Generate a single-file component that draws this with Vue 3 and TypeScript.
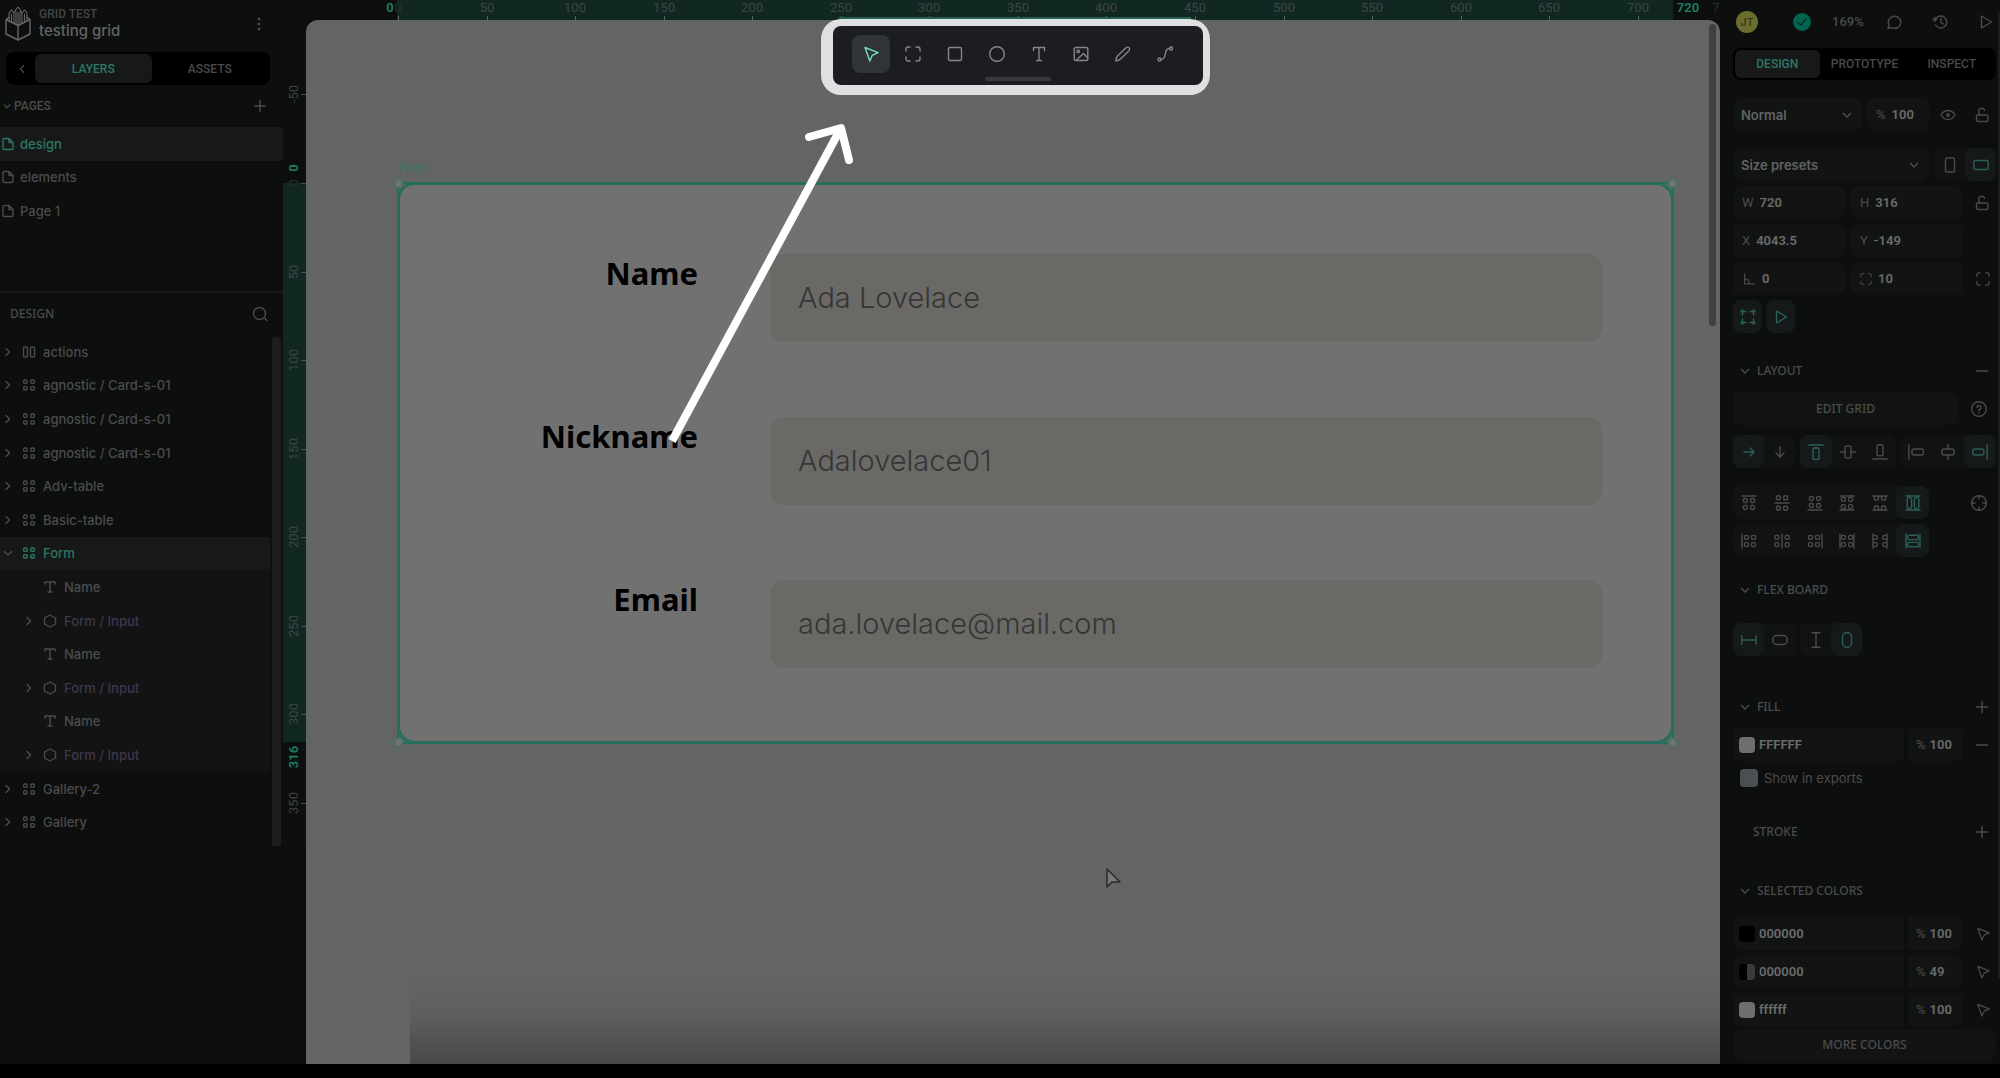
<script setup lang="ts">
import { h, ref, type FunctionalComponent } from 'vue'

const dot = (x: number, y: number) => `<rect x="${x - 2}" y="${y - 2}" width="4" height="4" rx="1.4"/>`
const dots = (...ys: number[]) => ys.map((y) => dot(4.4, y) + dot(11.6, y)).join('')
const line = (y: number) => `<path d="M1 ${y}h14"/>`
const turned = (body: string) => `<g transform="matrix(0 1 1 0 0 0)">${body}</g>`

const justify = [
  line(1) + dots(5.5, 12.5),
  dots(2.8, 13.2) + line(8),
  dots(3.5, 10.5) + line(15),
  line(1) + dots(4.4, 11.6) + line(15),
  '<path d="M1 1h14M1 15h14M2.4 1v3a1 1 0 0 0 1 1h2a1 1 0 0 0 1-1V1M9.6 1v3a1 1 0 0 0 1 1h2a1 1 0 0 0 1-1V1M2.4 15v-3a1 1 0 0 1 1-1h2a1 1 0 0 1 1 1v3M9.6 15v-3a1 1 0 0 1 1-1h2a1 1 0 0 1 1 1v3"/>',
  line(1) + line(15) + '<rect x="2.2" y="2.6" width="4.4" height="10.8" rx="1.6"/><rect x="9.4" y="2.6" width="4.4" height="10.8" rx="1.6"/>',
]

const glyphs: Record<string, string> = {
  logo: '<g stroke-width="1.4"><path d="M1 12.500 13 18.500l12-6V27L13 33 1 27zM13 18.500V33M1 12.500l3-2M25 12.500l-3-2"/><path d="M4 13.500V6l2.500-3L9 6v10M9 6l2-3.500L13 0l2 2.500L17 6v10M17 6l2.500-3L22 6v7.500M11 5v12M13 5v13M15 5v12M6.500 7v8M19.500 7v8" stroke-width="1.100"/></g>',
  more: '<g fill="currentColor" stroke="none"><circle cx="8" cy="3" r="1.300"/><circle cx="8" cy="8" r="1.300"/><circle cx="8" cy="13" r="1.300"/></g>',
  left: '<path d="m10 4-4 4 4 4"/>',
  right: '<path d="m6 4.500 3.500 3.500L6 11.500"/>',
  down: '<path d="m4.500 6.500 3.500 3.500 3.500-3.500"/>',
  plus: '<path d="M8 2.500v11M2.500 8h11"/>',
  minus: '<path d="M2.500 8h11"/>',
  page: '<path d="M9 2.500H4.500a1.500 1.500 0 0 0-1.500 1.500v8a1.500 1.500 0 0 0 1.500 1.500h7a1.500 1.500 0 0 0 1.500-1.500V6.500zM9 2.500v4h4"/>',
  search: '<circle cx="7.500" cy="7.500" r="6"/><path d="m12 12 3 2.500"/>',
  flex: '<rect x="2.500" y="3" width="4" height="10" rx="1"/><rect x="9.500" y="3" width="4" height="10" rx="1"/>',
  grid: '<rect x="2.700" y="3" width="3.400" height="3.400" rx=".8"/><rect x="9.900" y="3" width="3.400" height="3.400" rx=".8"/><rect x="2.700" y="9.600" width="3.400" height="3.400" rx=".8"/><rect x="9.900" y="9.600" width="3.400" height="3.400" rx=".8"/>',
  text: '<path d="M3 5V3h10v2M8 3v10M6 13h4"/>',
  component: '<path d="m8 2 5.500 3v6L8 14l-5.500-3V5z"/>',
  pointer: '<path d="m2 1.500 13 5.200-5.700 2.600L6.800 15z"/>',
  board: '<path d="M1 5V3a2 2 0 0 1 2-2h2M11 1h2a2 2 0 0 1 2 2v2M15 11v2a2 2 0 0 1-2 2h-2M5 15H3a2 2 0 0 1-2-2v-2"/>',
  rect: '<rect x="1.500" y="1.500" width="13" height="13" rx="1.500"/>',
  circle: '<circle cx="8" cy="8" r="7.300"/>',
  type: '<path d="M2.500 4.500v-3h11v3M8 1.500v13M5.500 14.500h5"/>',
  image: '<rect x="1.200" y="1.500" width="13.600" height="13" rx="1.500"/><circle cx="5.200" cy="5.500" r="1.200"/><path d="m3 14.500 7.500-7 4.300 4.500"/>',
  pencil: '<path d="M1 15c0-3 .5-4 1.500-5L11 1.800a2 2 0 0 1 3 0 2 2 0 0 1 0 2.900L5.500 13c-1 1-2 1.500-4.500 2z"/>',
  path: '<circle cx="2.500" cy="13.500" r="1.500"/><circle cx="14" cy="2.500" r="1.500"/><path d="M4 13.500c7 0 1.500-11 8.500-11"/>',
  comment: '<path d="M2 14.500 3 11a6.300 6 0 1 1 2.500 2.500z"/>',
  history: '<path d="M3.300 5.500A6 6 0 1 1 3.500 11M9 4.500V8.500l2.500 1.500M.8 5.500h4M2.800 3.500v4"/>',
  play: '<path d="M3.500 2v12l10-6z"/>',
  eye: '<path d="M1 8c3.500-6 10.500-6 14 0-3.500 6-10.500 6-14 0z"/><circle cx="8" cy="8" r="1.300"/>',
  lock: '<rect x="2.500" y="8" width="11.500" height="6.500" rx="1.500"/><path d="M5 8V4.500a2.700 2.700 0 0 1 5.500-1"/>',
  portrait: '<rect x="3.500" y="1" width="9" height="14" rx="1.500"/>',
  landscape: '<rect x=".8" y="3.500" width="14.400" height="9" rx="1.500"/>',
  angle: '<path d="M3 2.500v11h11M3 8c3.500 0 5.500 2 5.500 5.500"/>',
  clip: '<path d="M2.500.5v5.500M.5 2.500H6M13.500.5v5.500M15.500 2.500H10M2.500 15.500V10M.5 13.500H6M13.500 15.500V10M15.500 13.500H10"/>',
  help: '<circle cx="8" cy="8" r="7.300"/><path d="M6 6.500a2 2 0 1 1 2.800 1.800c-.5.3-.8.600-.8 1.200M8 11.300v.6"/>',
  target: '<circle cx="8" cy="8" r="7.300"/><path d="M8 1v3M8 12v3M1 8h3M12 8h3"/>',
  arrowRight: '<path d="M3 8h10M9 4l4 4-4 4"/>',
  arrowDown: '<path d="M8 3v10M4 9l4 4 4-4"/>',
  alignTop: '<path d="M.8 1h14.400"/><rect x="5" y="4" width="6" height="11.500" rx="1.500"/>',
  alignMiddle: '<rect x="5" y="2" width="6" height="12" rx="1.500"/><path d="M.5 8H5M11 8h4.500"/>',
  alignBottom: '<path d="M.8 15h14.400"/><rect x="5" y=".8" width="6" height="11" rx="1.500"/>',
  alignLeft: '<path d="M.8 1v14"/><rect x="4" y="5" width="11.500" height="6" rx="2"/>',
  alignCenter: '<rect x="2" y="5" width="12" height="6" rx="2"/><path d="M8 .5V5M8 11v4.500"/>',
  alignRight: '<path d="M15.200 1v14"/><rect x=".8" y="5" width="11" height="6" rx="2"/>',
  fixWidth: '<path d="M.8 4v8M15.200 4v8M1 8h14"/>',
  hugWidth: '<rect x=".8" y="3.500" width="14.400" height="9" rx="4"/>',
  fixHeight: '<path d="M4 .8h8M4 15.200h8M8 1v14"/>',
  hugHeight: '<rect x="3.500" y=".8" width="9" height="14.400" rx="4"/>',
  check: '<path d="m3 8.500 3.500 3 6.500-7"/>',
}
justify.forEach((body, i) => {
  glyphs[`justify${i}`] = body
  glyphs[`stack${i}`] = turned(body)
})

const Icon: FunctionalComponent<{ name: string; size?: number }> = (p) =>
  h('svg', {
    width: p.size ?? 16,
    height: p.name === 'logo' ? 34 : (p.size ?? 16),
    viewBox: p.name === 'logo' ? '0 0 26 34' : '0 0 16 16',
    fill: 'none',
    stroke: 'currentColor',
    'stroke-width': 1.4,
    'stroke-linejoin': 'round',
    'stroke-linecap': 'round',
    'aria-hidden': 'true',
    innerHTML: glyphs[p.name],
  })
Icon.props = ['name', 'size']

const pages = ['design', 'elements', 'Page 1']

interface Layer { name: string; icon: string; kind?: 'active' | 'child' | 'component' }
const card: Layer = { name: 'agnostic / Card-s-01', icon: 'grid' }
const pair: Layer[] = [
  { name: 'Name', icon: 'text', kind: 'child' },
  { name: 'Form / Input', icon: 'component', kind: 'component' },
]
const layers: Layer[] = [
  { name: 'actions', icon: 'flex' },
  card, card, card,
  { name: 'Adv-table', icon: 'grid' },
  { name: 'Basic-table', icon: 'grid' },
  { name: 'Form', icon: 'grid', kind: 'active' },
  ...pair, ...pair, ...pair,
  { name: 'Gallery-2', icon: 'grid' },
  { name: 'Gallery', icon: 'grid' },
]

const zoom = 1.771
const marks = (from: number, to: number) =>
  Array.from({ length: (to - from) / 50 + 1 }, (_, i) => from + i * 50)
const along = (value: number, origin: number) => `${Math.round(origin + value * zoom)}px`
const across = marks(0, 700)
const downwards = marks(-50, 350)

const tools = ['pointer', 'board', 'rect', 'circle', 'type', 'image', 'pencil', 'path']
const fields = [
  { id: 'name', label: 'Name', value: 'Ada Lovelace' },
  { id: 'nickname', label: 'Nickname', value: 'Adalovelace01' },
  { id: 'email', label: 'Email', value: 'ada.lovelace@mail.com' },
]
const measures = [
  [{ sign: 'W', value: '720', name: 'Width' }, { sign: 'H', value: '316', name: 'Height' }],
  [{ sign: 'X', value: '4043.5', name: 'X' }, { sign: 'Y', value: '-149', name: 'Y' }],
]
const colors = [
  { hex: '000000', alpha: '100', tone: 'black' },
  { hex: '000000', alpha: '49', tone: 'half-tone' },
  { hex: 'ffffff', alpha: '100', tone: 'white' },
]
const alignGroups = [
  { names: ['arrowRight', 'arrowDown'], on: 0, cls: 'two' },
  { names: ['alignTop', 'alignMiddle', 'alignBottom'], on: 0, cls: 'three' },
  { names: ['alignLeft', 'alignCenter', 'alignRight'], on: 2, cls: 'three' },
]
const sizeGroups = [
  { names: ['fixWidth', 'hugWidth'], on: 0 },
  { names: ['fixHeight', 'hugHeight'], on: 1 },
]
const exported = ref(false)
</script>

<template>
  <div class="app">
    <div class="workspace">
      <aside class="left">
        <header class="file">
          <Icon name="logo" :size="26" />
          <div class="titles">
            <span class="project">GRID TEST</span>
            <span class="title">testing grid</span>
          </div>
          <button class="bare" aria-label="File menu"><Icon name="more" /></button>
        </header>
        <nav class="tabs left-tabs">
          <button class="back" aria-label="Collapse"><Icon name="left" :size="14" /></button>
          <button class="tab on">LAYERS</button>
          <button class="tab">ASSETS</button>
        </nav>
        <div class="pages-head">
          <Icon name="down" :size="14" />
          <span>PAGES</span>
          <button class="bare" aria-label="Add page"><Icon name="plus" /></button>
        </div>
        <ul class="pages">
          <li v-for="(p, i) in pages" :key="p">
            <button :class="{ on: i === 0 }"><Icon name="page" />{{ p }}</button>
          </li>
        </ul>
        <div class="layers-head">
          <span>DESIGN</span>
          <button class="bare" aria-label="Search layers"><Icon name="search" /></button>
        </div>
        <div class="layers-wrap">
          <ul class="layers">
            <li v-for="(l, i) in layers" :key="i">
              <button :class="l.kind">
                <Icon v-if="l.kind !== 'child'" class="fold" :name="l.kind === 'active' ? 'down' : 'right'" />
                <span v-else class="fold"></span>
                <Icon :name="l.icon" />
                <span class="name">{{ l.name }}</span>
              </button>
            </li>
          </ul>
          <div class="layers-bar"></div>
        </div>
      </aside>

      <main class="center">
        <div class="ruler-top">
          <div class="range"></div>
          <template v-for="m in across" :key="m">
            <span class="mark" :class="{ faded: m === 0 }" :style="{ left: along(m, 115) }">{{ m }}</span>
            <i :style="{ left: along(m, 115) }"></i>
          </template>
          <span class="mark faded last">7</span>
          <span class="mark edge start">0</span>
          <span class="mark edge end">720</span>
          <div class="glow"></div>
        </div>
        <div class="ruler-left">
          <div class="range"></div>
          <template v-for="m in downwards" :key="m">
            <span class="mark" :class="{ faded: m === 0 }" :style="{ top: along(m, 163) }">{{ m }}</span>
            <i :style="{ top: along(m, 163) }"></i>
          </template>
          <span class="mark edge start">0</span>
          <span class="mark edge end">316</span>
        </div>
        <section class="canvas">
          <div class="next-board"></div>
          <span class="board-name">Form</span>
          <form class="board" @submit.prevent>
            <div v-for="f in fields" :key="f.id" class="field">
              <label :for="f.id">{{ f.label }}</label>
              <input :id="f.id" type="text" :value="f.value" />
            </div>
          </form>
          <div class="selection"><b></b><b></b><b></b><b></b></div>
          <div class="canvas-bar"></div>
          <svg class="cursor" width="18" height="22" viewBox="0 0 18 22"><path d="M2 2v18l5-5h8z" fill="#7a7a7a" stroke="#2a2a2a" stroke-width="1.500" stroke-linejoin="round" /></svg>
        </section>
        <div class="toolbar-frame">
          <div class="toolbar">
            <button v-for="(t, i) in tools" :key="t" :class="{ on: i === 0 }" :aria-label="t"><Icon :name="t" /></button>
            <span class="grip"></span>
          </div>
        </div>
        <svg class="arrow" width="200" height="330" viewBox="0 0 200 330" fill="none" stroke="#fff" stroke-width="8" stroke-linejoin="round">
          <path d="M12 321 181 8" />
          <path d="m149 17 32-9 8 32" stroke-linecap="round" />
        </svg>
      </main>

      <aside class="right">
        <header class="status">
          <span class="avatar">JT</span>
          <span class="saved"><Icon name="check" :size="14" /></span>
          <span class="percent">169%</span>
          <button class="bare" aria-label="Comments"><Icon name="comment" /></button>
          <button class="bare" aria-label="History"><Icon name="history" /></button>
          <button class="bare" aria-label="Play"><Icon name="play" /></button>
        </header>
        <nav class="tabs">
          <button class="tab on">DESIGN</button>
          <button class="tab proto">PROTOTYPE</button>
          <button class="tab">INSPECT</button>
        </nav>

        <div class="row wider">
          <label class="pick blend"><select aria-label="Blend mode"><option>Normal</option></select><Icon name="down" /></label>
          <label class="box opacity"><span>%</span><input type="text" value="100" aria-label="Opacity" /></label>
          <button class="bare push" aria-label="Visible"><Icon name="eye" /></button>
          <button class="bare side" aria-label="Lock"><Icon name="lock" /></button>
        </div>
        <div class="row wide">
          <label class="pick presets"><select aria-label="Size presets"><option>Size presets</option></select><Icon name="down" /></label>
          <div class="group push two">
            <button aria-label="Portrait"><Icon name="portrait" /></button>
            <button class="on" aria-label="Landscape"><Icon name="landscape" /></button>
          </div>
        </div>
        <div v-for="(m, i) in measures" :key="i" class="row">
          <label v-for="f in m" :key="f.sign" class="box half"><span>{{ f.sign }}</span><input type="text" :value="f.value" :aria-label="f.name" /></label>
          <button v-if="i === 0" class="bare side" aria-label="Keep ratio"><Icon name="lock" /></button>
        </div>
        <div class="row">
          <label class="box half"><Icon name="angle" :size="14" /><input type="text" value="0" aria-label="Rotation" /></label>
          <label class="box half"><Icon name="board" :size="12" /><input type="text" value="10" aria-label="Radius" /></label>
          <button class="bare side" aria-label="Corners"><Icon name="board" :size="14" /></button>
        </div>
        <div class="row">
          <button class="square" aria-label="Clip content"><Icon name="clip" /></button>
          <button class="square" aria-label="Show in view mode"><Icon name="play" /></button>
        </div>

        <h2 class="layout-head"><Icon name="down" />LAYOUT<button class="bare" aria-label="Remove layout"><Icon name="minus" /></button></h2>
        <div class="row">
          <button class="flat edit">EDIT GRID</button>
          <button class="bare help" aria-label="Help"><Icon name="help" /></button>
        </div>
        <div class="row spread">
          <div v-for="(g, k) in alignGroups" :key="k" class="group" :class="g.cls">
            <button v-for="(n, i) in g.names" :key="n" :class="{ on: i === g.on }" :aria-label="n"><Icon :name="n" /></button>
          </div>
        </div>
        <div class="row wider">
          <div class="group six">
            <button v-for="i in 6" :key="i" :class="{ on: i === 6 }" :aria-label="'Justify ' + i"><Icon :name="'justify' + (i - 1)" /></button>
          </div>
          <button class="bare help" aria-label="Locate"><Icon name="target" /></button>
        </div>
        <div class="row">
          <div class="group six">
            <button v-for="i in 6" :key="i" :class="{ on: i === 6 }" :aria-label="'Align ' + i"><Icon :name="'stack' + (i - 1)" /></button>
          </div>
        </div>

        <h2 class="flex-head"><Icon name="down" />FLEX BOARD</h2>
        <div class="row wide">
          <div v-for="(g, k) in sizeGroups" :key="k" class="group two">
            <button v-for="(n, i) in g.names" :key="n" :class="{ on: i === g.on }" :aria-label="n"><Icon :name="n" /></button>
          </div>
        </div>

        <h2 class="fill-head"><Icon name="down" />FILL<button class="bare" aria-label="Add fill"><Icon name="plus" /></button></h2>
        <div class="row">
          <label class="box hex"><span class="swatch white"></span><input type="text" value="FFFFFF" aria-label="Fill colour" /></label>
          <label class="box alpha"><span>%</span><input type="text" value="100" aria-label="Fill opacity" /></label>
          <button class="bare side" aria-label="Remove fill"><Icon name="minus" /></button>
        </div>
        <label class="export"><input v-model="exported" type="checkbox" />Show in exports</label>

        <h2 class="stroke-head">STROKE<button class="bare" aria-label="Add stroke"><Icon name="plus" /></button></h2>

        <h2 class="colors-head"><Icon name="down" />SELECTED COLORS</h2>
        <div class="colors">
          <div v-for="(c, i) in colors" :key="i" class="row">
            <label class="box hex"><span class="swatch" :class="c.tone"></span><input type="text" :value="c.hex" aria-label="Colour" /></label>
            <label class="box alpha"><span>%</span><input type="text" :value="c.alpha" aria-label="Opacity" /></label>
            <button class="bare side" aria-label="Select users of this colour"><Icon name="pointer" :size="14" /></button>
          </div>
        </div>
        <button class="flat more">MORE COLORS</button>
        <div class="right-bar"></div>
      </aside>
    </div>
    <footer class="base"></footer>
  </div>
</template>

<style>
body {
  margin: 0;
  background: #000;
}
</style>

<style scoped>
* {
  box-sizing: border-box;
}
.app {
  min-height: 100vh;
  display: flex;
  flex-direction: column;
  background: #0c0d0e;
  color: #4a4c4c;
  font: 500 13px/16px Inter, sans-serif;
}
.workspace {
  flex: 1;
  display: grid;
  grid-template-columns: 283px minmax(0, 1fr) 280px;
}
.base {
  height: 14px;
  background: #000;
}
button,
input,
select {
  font: inherit;
  color: inherit;
  background: none;
  border: 0;
  padding: 0;
  margin: 0;
  min-width: 0;
  outline: 0;
}
button {
  display: flex;
  align-items: center;
  justify-content: center;
}
ul {
  list-style: none;
  margin: 0;
  padding: 0;
}
svg {
  flex: none;
}

/* left sidebar */
.left {
  background: #0d0e0e;
  align-self: start;
  height: 846px;
}
.file {
  display: flex;
  align-items: flex-start;
  height: 52px;
  padding: 7px 16px 0 5px;
  color: #666868;
}
.titles {
  display: flex;
  flex-direction: column;
  flex: 1;
  margin-left: 8px;
}
.project {
  font: 500 12px/14px Roboto, sans-serif;
  color: #444646;
}
.title {
  font-size: 15px;
  line-height: 20px;
  color: #626464;
}
.file .bare {
  margin-top: 9px;
  color: #505252;
}
.tabs {
  display: flex;
  height: 32px;
  padding: 2px;
  border-radius: 8px;
  background: #000;
  font: 500 12px/16px Roboto, sans-serif;
  color: #484a4a;
}
.left-tabs {
  height: 33px;
  margin: 0 13px 0 6px;
}
.back {
  width: 27px;
}
.tab {
  flex: 1;
  border-radius: 6px;
}
.tab.on {
  background: #171919;
  color: #2d7767;
}
.tab.proto {
  flex: 0 0 90px;
}
.pages-head {
  display: flex;
  align-items: center;
  height: 42px;
  padding-right: 15px;
  font: 500 12px/16px Roboto, sans-serif;
}
.pages-head .bare,
.layers-head .bare {
  margin-left: auto;
}
.pages {
  display: grid;
  grid-auto-rows: 1fr;
  height: 101px;
}
.pages button {
  width: 100%;
  height: 100%;
  justify-content: flex-start;
  gap: 4px;
}
.pages .on {
  background: #161918;
  color: #2d7767;
}
.layers-head {
  display: flex;
  align-items: center;
  height: 44px;
  margin-top: 63px;
  padding: 0 15px 0 10px;
  border-top: 2px solid #171919;
  font: 500 12px/16px "Noto Sans", sans-serif;
}
.layers-wrap {
  display: flex;
  justify-content: space-between;
  height: 511px;
  padding-right: 2px;
}
.layers {
  display: grid;
  grid-auto-rows: 1fr;
  width: 270px;
  height: 504px;
}
.layers button {
  width: 100%;
  height: 100%;
  justify-content: flex-start;
}
.layers .fold {
  width: 16px;
  margin-right: 5px;
}
.name {
  margin-left: 6px;
}
.layers .active {
  background: #161918;
}
.layers .active > :not(.fold) {
  color: #2d7767;
}
.layers .child,
.layers .component {
  padding-left: 21px;
  background: #121414;
}
.layers .component .name {
  color: #3f374d;
}
.layers-bar {
  width: 9px;
  margin-top: 2px;
  border-radius: 4px 4px 0 0;
  background: #1b1d1e;
}

/* rulers and canvas */
.center {
  position: relative;
  display: grid;
  grid-template: 20px minmax(0, 1fr) / 23px minmax(0, 1fr);
  overflow: hidden;
  font: 400 13px/16px Roboto, sans-serif;
}
.ruler-top,
.ruler-left {
  position: relative;
  background: #0d0e0e;
}
.ruler-top {
  grid-column: 1 / 3;
}
.ruler-left {
  height: 826px;
}
.range {
  position: absolute;
  background: #112822;
}
.ruler-top .range {
  left: 114px;
  width: 1276px;
  height: 20px;
}
.ruler-left .range {
  top: 163px;
  width: 23px;
  height: 559px;
}
.mark,
.center i {
  position: absolute;
}
.ruler-top .mark {
  top: 0;
  transform: translateX(-50%);
}
.ruler-top i {
  top: 16px;
  width: 1px;
  height: 4px;
  background: #4b6a62;
}
.ruler-left .mark {
  left: 11px;
  transform: translate(-50%, -50%) rotate(-90deg);
}
.ruler-left i {
  left: 18px;
  width: 5px;
  height: 1px;
  background: #4b504e;
}
.glow {
  position: absolute;
  left: 556px;
  top: 17px;
  width: 352px;
  height: 3px;
  background: #245f50;
}
.mark {
  color: #3e4644;
}
.mark.faded {
  color: #2a3130;
}
.mark.edge {
  font-weight: 600;
  color: #1c8067;
}
.ruler-top .last {
  left: 1433px;
}
.ruler-top .start {
  left: 107px;
}
.ruler-top .end {
  left: 1405px;
}
.ruler-left .start {
  top: 148px;
}
.ruler-left .end {
  top: 737px;
}
.canvas {
  position: relative;
  border-radius: 12px 12px 0 0;
  background: #636564;
  overflow: hidden;
}
.next-board {
  position: absolute;
  left: 104px;
  right: 0;
  bottom: 0;
  height: 84px;
  background: linear-gradient(#636464, #5e5f5f 40%, #474948);
}
.board-name {
  position: absolute;
  left: 92px;
  top: 140px;
  color: #3a7364;
}
.board {
  position: absolute;
  left: 91px;
  top: 162px;
  width: 1277px;
  height: 562px;
  padding: 69px 69px 0;
  border: 3px solid #286e5c;
  border-radius: 18px;
  background: #717171;
}
.field {
  display: flex;
  justify-content: space-between;
  margin-bottom: 75px;
}
.field label {
  width: 229px;
  text-align: right;
  font: 700 31px/38px "Noto Sans", sans-serif;
  color: #000;
}
.field input {
  width: 832px;
  height: 88px;
  padding: 0 28px 2px;
  border-radius: 14px;
  background: #6a6966;
  font: 300 29px/40px Inter, sans-serif;
  color: #363636;
}
.selection {
  position: absolute;
  left: 91px;
  top: 162px;
  width: 1277px;
  height: 562px;
  border: 2px solid #286e5c;
  pointer-events: none;
}
.selection b {
  position: absolute;
  width: 9px;
  height: 9px;
  border: 1px solid #2c7a66;
  border-radius: 5px;
  background: #727272;
}
.selection b:nth-child(odd) {
  left: -5px;
}
.selection b:nth-child(even) {
  right: -5px;
}
.selection b:nth-child(-n + 2) {
  top: -5px;
}
.selection b:nth-child(n + 3) {
  bottom: -5px;
}
.canvas-bar {
  position: absolute;
  top: 4px;
  right: 4px;
  width: 7px;
  height: 302px;
  border-radius: 4px;
  background: #3e4041;
}
.cursor {
  position: absolute;
  left: 799px;
  top: 847px;
}
.toolbar-frame {
  position: absolute;
  left: 538px;
  top: 19px;
  padding: 7px 7px 10px 12px;
  border-radius: 20px;
  background: #dfe0e2;
}
.toolbar {
  position: relative;
  display: flex;
  gap: 4px;
  width: 370px;
  height: 59px;
  padding: 9px 19px;
  border-radius: 8px;
  background: #1c1d20;
  color: #85868a;
}
.toolbar button {
  width: 38px;
  height: 38px;
  border-radius: 8px;
}
.toolbar .on {
  background: #303436;
  color: #6fe0c4;
}
.grip {
  position: absolute;
  left: 152px;
  bottom: 4px;
  width: 66px;
  height: 4px;
  border-radius: 2px;
  background: #38393c;
}
.arrow {
  position: absolute;
  left: 377px;
  top: 120px;
}

/* right sidebar */
.right {
  position: relative;
  padding: 0 4px 0 13px;
  background: #0d0e0e;
}
.status {
  display: flex;
  align-items: center;
  height: 44px;
  margin-bottom: 4px;
  padding-left: 3px;
}
.avatar {
  flex: none;
  width: 22px;
  height: 22px;
  border-radius: 11px;
  background: #6a6d2e;
  color: #33351b;
  font-size: 11px;
  line-height: 22px;
  text-align: center;
}
.saved {
  display: flex;
  flex: none;
  align-items: center;
  justify-content: center;
  width: 18px;
  height: 18px;
  margin-left: 35px;
  border-radius: 9px;
  background: #00654f;
  color: #06251e;
}
.percent {
  margin: 0 auto 0 21px;
  font: 500 13px/16px Roboto, sans-serif;
}
.status .bare {
  margin-right: 30px;
}
.status .bare:last-child {
  margin-right: 2px;
}
.row {
  display: flex;
  height: 33px;
  margin-top: 5px;
}
.row.wide {
  margin-top: 17px;
}
.row.wider {
  margin-top: 18px;
}
.row.spread {
  justify-content: space-between;
  margin-top: 10px;
}
.box,
.pick {
  display: flex;
  align-items: center;
  border-radius: 8px;
  background: #121414;
}
.box {
  margin-right: 6px;
  padding-left: 9px;
  gap: 6px;
  font: 400 13px/16px Roboto, sans-serif;
}
.box input {
  width: 100%;
  font-weight: 600;
  color: #6a6c6c;
}
.half {
  width: 112px;
}
.pick {
  position: relative;
  padding-right: 7px;
  font-weight: 600;
  color: #626464;
}
.pick select {
  flex: 1;
  height: 33px;
  padding-left: 8px;
  appearance: none;
}
.pick svg {
  color: #505252;
}
.blend {
  width: 129px;
  margin-right: 5px;
}
.opacity {
  width: 62px;
}
.presets {
  width: 196px;
}
.push {
  margin-left: auto;
}
.bare.push {
  margin-right: 18px;
}
.side {
  margin-left: auto;
  margin-right: 6px;
}
.push + .side {
  margin-left: 0;
}
.help {
  margin-left: auto;
  margin-right: 9px;
}
.group {
  display: flex;
  border-radius: 8px;
  background: #111313;
}
.group button {
  flex: 1;
  border-radius: 8px;
}
.group .on,
.square {
  background: #161919;
  color: #286254;
}
.group + .group {
  margin-left: 5px;
}
.spread .group + .group {
  margin-left: 0;
}
.two {
  width: 62px;
}
.three {
  width: 96px;
}
.six {
  width: 196px;
}
.square {
  width: 29px;
  margin-right: 4px;
  border-radius: 8px;
}
h2 {
  display: flex;
  align-items: center;
  height: 32px;
  margin: 0;
  padding: 0 6px 0 4px;
  gap: 4px;
  font: 500 12px/16px "Noto Sans", sans-serif;
}
h2 .bare {
  margin-left: auto;
}
.layout-head {
  margin-top: 22px;
}
.flex-head {
  margin-top: 17px;
}
.fill-head {
  margin-top: 35px;
}
.stroke-head {
  margin-top: 26px;
  padding-left: 20px;
}
.colors-head {
  margin-top: 27px;
  margin-bottom: 10px;
}
.flat {
  border-radius: 8px;
  background: #121414;
  font: 500 12px/16px "Noto Sans", sans-serif;
}
.edit {
  width: 225px;
}
.hex {
  width: 171px;
  margin-right: 4px;
  padding-left: 6px;
  gap: 4px;
  border-radius: 8px 2px 2px 8px;
}
.alpha {
  width: 55px;
  margin-right: 0;
  padding-left: 8px;
  gap: 4px;
  border-radius: 2px 8px 8px 2px;
}
.swatch {
  flex: none;
  width: 16px;
  height: 16px;
  border-radius: 4px;
}
.swatch.white {
  background: #6d6e6e;
}
.swatch.black {
  background: #000;
}
.swatch.half-tone {
  background: linear-gradient(90deg, #000 50%, #393a3a 50%);
}
.export {
  display: flex;
  align-items: center;
  gap: 6px;
  height: 25px;
  margin-top: 4px;
  padding-left: 7px;
  font-weight: 400;
}
.export input {
  appearance: none;
  width: 18px;
  height: 18px;
  border-radius: 4px;
  background: #4b4e52;
}
.colors .row:first-child {
  margin-top: 0;
}
.more {
  width: 100%;
  height: 32px;
  margin-top: 3px;
}
.right-bar {
  position: absolute;
  top: 12px;
  right: 0;
  width: 2px;
  height: 966px;
  background: #1b1d1e;
}
</style>
